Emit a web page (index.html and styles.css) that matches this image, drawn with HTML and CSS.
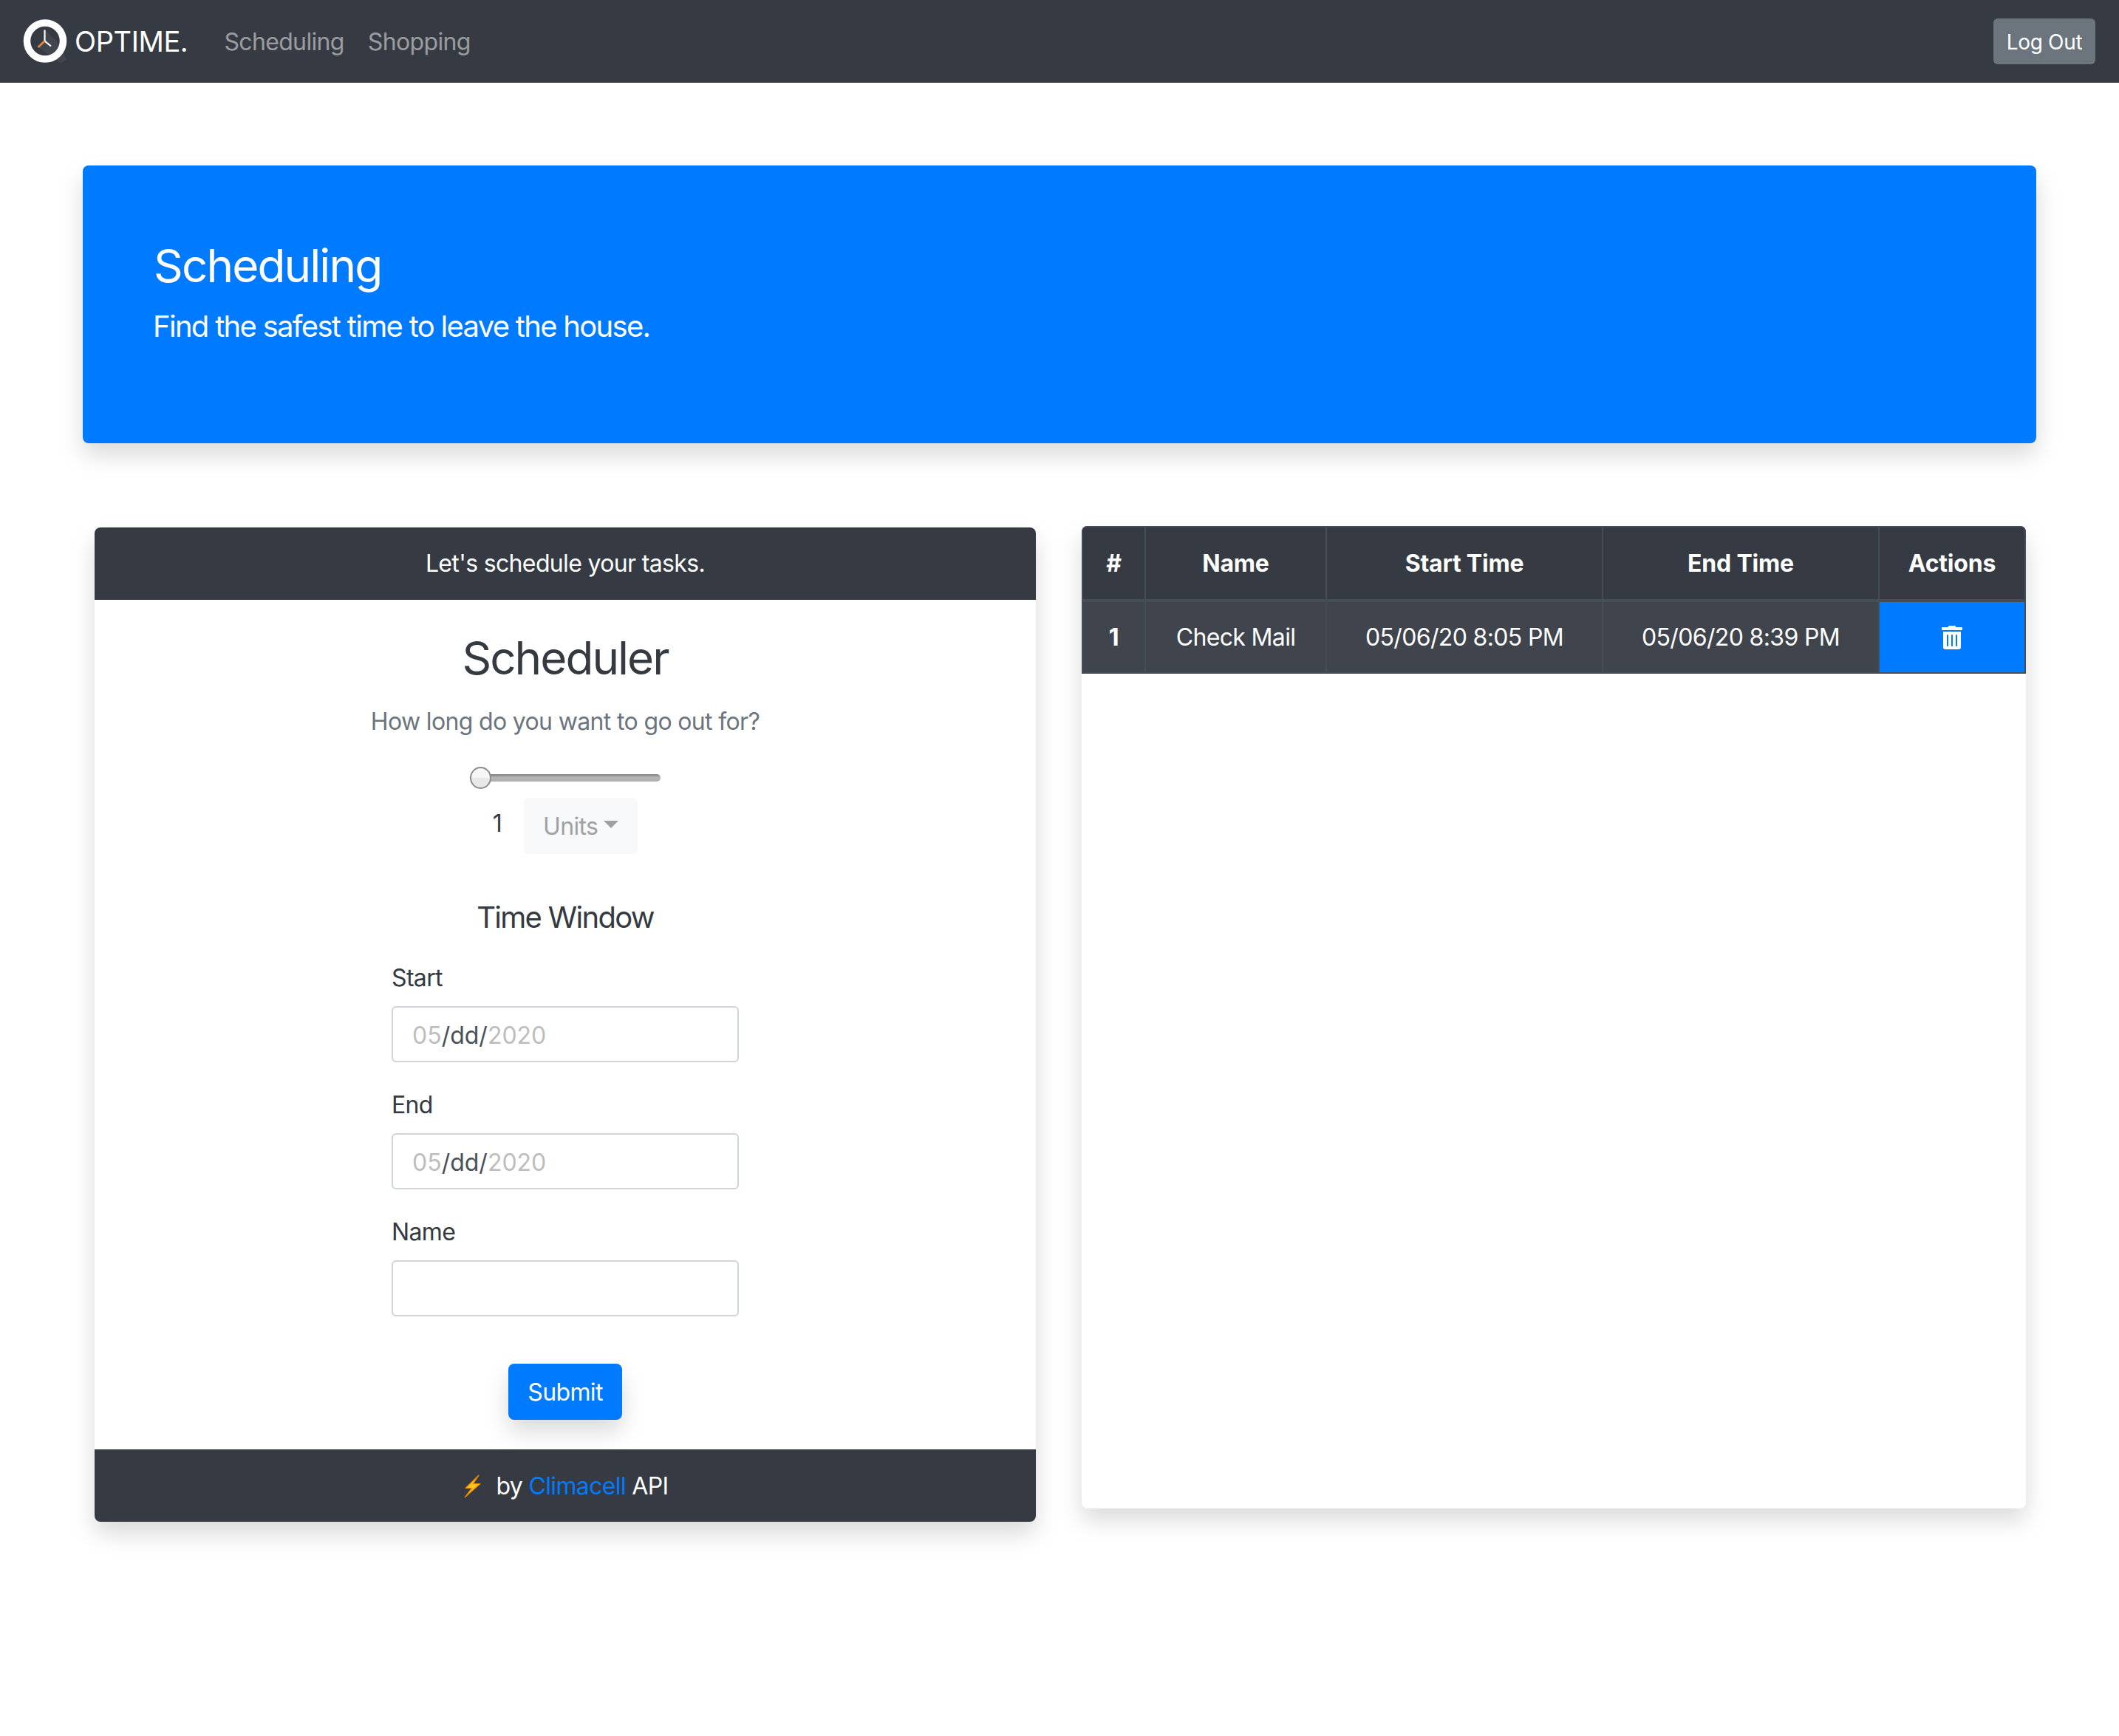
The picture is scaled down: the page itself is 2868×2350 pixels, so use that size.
FILE: index.html
```html
<!DOCTYPE html>
<html lang="en">
<head>
<meta charset="utf-8">
<title>Optime</title>
<link rel="stylesheet" href="styles.css">
</head>
<body>
<nav class="navbar">
  <a class="brand">
    <svg class="logo" viewBox="0 0 60 60" aria-hidden="true">
      <path d="M31 15L48 33 56 48 59 54 52 60 46 56 21 38 29 29Z" fill="#4a4e56" opacity=".6"/>
      <circle cx="30" cy="29.500" r="24.500" fill="none" stroke="#fff" stroke-width="9.500"/>
      <path d="M29.500 14.500V29.500L38 36.500" fill="none" stroke="#fff" stroke-width="2.200"/>
      <path d="M29.500 29.500L20.500 38" fill="none" stroke="#e9873f" stroke-width="2.600"/>
    </svg>
    <span class="brand-text">OPTIME.</span>
  </a>
  <a class="nav-link">Scheduling</a>
  <a class="nav-link">Shopping</a>
  <button class="logout">Log Out</button>
</nav>

<header class="jumbotron">
  <h1>Scheduling</h1>
  <p>Find the safest time to leave the house.</p>
</header>

<main class="columns">
  <section class="card scheduler">
    <div class="bar bar-top">Let's schedule your tasks.</div>
    <div class="card-body">
      <h2>Scheduler</h2>
      <p class="muted">How long do you want to go out for?</p>
      <div class="slider"><span class="thumb"></span></div>
      <div class="units-row">
        <span class="value">1</span>
        <button class="units">Units<span class="caret"></span></button>
      </div>
      <h3>Time Window</h3>
      <form class="fields">
        <label>Start</label>
        <div class="input"><span class="dim">05</span>/dd/<span class="dim">2020</span></div>
        <label>End</label>
        <div class="input"><span class="dim">05</span>/dd/<span class="dim">2020</span></div>
        <label>Name</label>
        <div class="input"></div>
      </form>
      <button class="submit">Submit</button>
    </div>
    <div class="bar bar-bottom">
      <svg class="bolt" viewBox="0 0 26 32" aria-hidden="true">
        <path d="M22 1L4 18.500H12.500L3 31 24 12.500H14.500Z" fill="#ffc21f" stroke="#e98a00" stroke-width="1.200" stroke-linejoin="round"/>
      </svg>
      <span>by <a class="link">Climacell</a> API</span>
    </div>
  </section>

  <section class="card tasks">
    <table>
      <thead>
        <tr>
          <th class="c-num">#</th>
          <th class="c-name">Name</th>
          <th class="c-time">Start Time</th>
          <th class="c-time">End Time</th>
          <th class="c-act">Actions</th>
        </tr>
      </thead>
      <tbody>
        <tr>
          <th>1</th>
          <td>Check Mail</td>
          <td>05/06/20 8:05 PM</td>
          <td>05/06/20 8:39 PM</td>
          <td class="action">
            <svg class="trash" viewBox="0 0 448 512" aria-hidden="true"><path fill="#fff" d="M32 464a48 48 0 0 0 48 48h288a48 48 0 0 0 48-48V128H32zm272-256a16 16 0 0 1 32 0v224a16 16 0 0 1-32 0zm-96 0a16 16 0 0 1 32 0v224a16 16 0 0 1-32 0zm-96 0a16 16 0 0 1 32 0v224a16 16 0 0 1-32 0zM432 32H312l-9.400-18.700A24 24 0 0 0 281.100 0H166.800a23.720 23.720 0 0 0-21.400 13.300L136 32H16A16 16 0 0 0 0 48v32a16 16 0 0 0 16 16h416a16 16 0 0 0 16-16V48a16 16 0 0 0-16-16z"/></svg>
          </td>
        </tr>
      </tbody>
    </table>
  </section>
</main>
</body>
</html>
```
FILE: styles.css
```css
* { box-sizing: border-box; }
html, body { margin: 0; padding: 0; }
body {
  background: #fff;
  color: #343a40;
  font-family: Inter, "Liberation Sans", sans-serif;
  font-size: 32px;
  line-height: 48px;
  letter-spacing: -0.65px;
  height: 2350px;
}
h1, h2, h3, p { margin: 0; font-weight: 400; }
button { font-family: inherit; letter-spacing: inherit; border: 0; }

.navbar {
  height: 112px;
  background: #363a42;
  display: flex;
  align-items: center;
  padding: 0 32px 0 31px;
}
.brand { display: flex; align-items: center; margin-right: 33px; }
.logo { width: 60px; height: 60px; display: block; margin-right: 10px; }
.brand-text { color: #fff; font-size: 38px; letter-spacing: -0.4px; }
.nav-link { color: rgba(255,255,255,.5); font-size: 32px; padding: 2px 16px 0; }
.logout {
  margin-left: auto;
  width: 138px;
  height: 62px;
  background: #6c757d;
  color: #fff;
  font-size: 28px;
  letter-spacing: -0.3px;
  border-radius: 6px;
  padding: 2px 0 0;
}

.jumbotron {
  margin: 112px 112px 0;
  height: 376px;
  padding: 98px 96px 0;
  background: #007aff;
  border-radius: 8px;
  color: #fff;
  box-shadow: 0 16px 32px rgba(0,0,0,.15);
}
.jumbotron h1 { font-size: 62px; line-height: 76px; margin-bottom: 14px; letter-spacing: -1.9px; }
.jumbotron p { font-size: 40px; line-height: 60px; letter-spacing: -1.7px; margin-left: -1px; }

.columns {
  display: flex;
  align-items: flex-start;
  gap: 62px;
  padding: 112px 126px 0 128px;
}
.card {
  background: #fff;
  border-radius: 8px;
  box-shadow: 0 16px 32px rgba(0,0,0,.15);
  overflow: hidden;
}
.scheduler { width: 1274px; height: 1346px; margin-top: 2px; display: flex; flex-direction: column; }
.tasks { width: 1278px; height: 1330px; }

.bar {
  background: #363a42;
  color: #fff;
  height: 98px;
  display: flex;
  align-items: center;
  justify-content: center;
  flex: none;
}
.bar-bottom { padding-top: 2px; }
.link { color: #007aff; }
.bolt { width: 26px; height: 32px; margin-right: 20px; }

.card-body {
  flex: 1;
  display: flex;
  flex-direction: column;
  align-items: center;
  padding-top: 40px;
}
.card-body h2 { font-size: 62px; line-height: 77px; margin-bottom: 24px; letter-spacing: -2px; }
.muted { color: #6c757d; }
.slider {
  position: relative;
  width: 258px;
  height: 10px;
  margin-top: 47px;
  border-radius: 5px;
  background: linear-gradient(#7d7d7d, #b5b5b5 45%, #b0b0b0);
}
.thumb {
  position: absolute;
  left: 0;
  top: -10px;
  width: 29px;
  height: 30px;
  border-radius: 50%;
  background: linear-gradient(#f6f6f6 50%, #e8e8e8 50%);
  border: 2px solid #8c8c8c;
}
.units-row {
  display: flex;
  align-items: flex-start;
  margin-top: 22px;
}
.value { margin-right: 30px; line-height: 46px; padding-top: 12px; }
.units {
  width: 154px;
  height: 76px;
  background: #f8f9fa;
  color: #9fa2a5;
  font-size: 32px;
  border-radius: 6px;
  padding: 0;
  display: flex;
  align-items: center;
  justify-content: center;
}
.caret {
  margin-left: 8px;
  margin-bottom: 4px;
  border-top: 10px solid #9fa2a5;
  border-left: 10px solid transparent;
  border-right: 10px solid transparent;
}
.card-body h3 { font-size: 40px; line-height: 48px; margin-top: 62px; margin-bottom: 32px; letter-spacing: -1.7px; }
.fields { width: 470px; display: flex; flex-direction: column; }
.fields label { display: block; padding-top: 2px; margin-bottom: 14px; }
.input {
  height: 76px;
  border: 2px solid #ced4da;
  border-radius: 6px;
  padding: 14px 26px 10px;
  margin-bottom: 32px;
  color: #495057;
  letter-spacing: 0;
}
.dim { color: #bdbdbd; }
.submit {
  margin-top: 32px;
  width: 154px;
  height: 76px;
  background: #007aff;
  color: #fff;
  font-size: 32px;
  border-radius: 8px;
  padding: 0;
  box-shadow: 0 16px 32px rgba(0,0,0,.15);
}

table {
  width: 100%;
  table-layout: fixed;
  border-collapse: collapse;
  background: #363a42;
  color: #fff;
}
th, td {
  border: 2px solid #454d55;
  height: 98px;
  padding: 0;
  text-align: center;
  vertical-align: middle;
  font-weight: 400;
}
th { font-weight: 700; letter-spacing: -0.2px; }
thead th { border-bottom-width: 4px; height: 100px; }
tbody tr { background: #40444c; }
.c-num { width: 85px; }
.c-name { width: 245px; }
.c-time { width: 374px; }
.action { background: #007aff; }
.trash { width: 28px; height: 32px; display: block; margin: 0 auto; }
```
